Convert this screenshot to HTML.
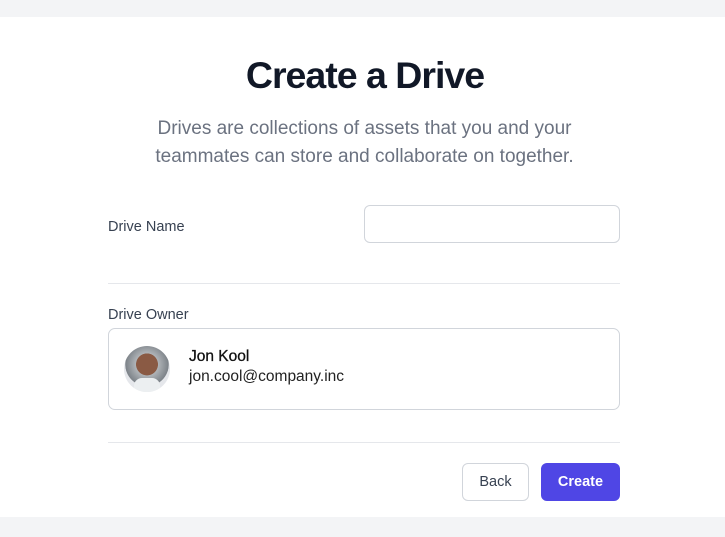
<!DOCTYPE html>
<html><head><meta charset="utf-8"><style>
*{margin:0;padding:0;box-sizing:border-box}
body{width:725px;height:537px;background:#f3f4f6;font-family:"Liberation Sans",sans-serif;position:relative;overflow:hidden}
.card{position:absolute;left:0;top:17px;width:725px;height:500px;background:#fff}
.abs{position:absolute}
h1{position:absolute;left:0;width:730px;top:37px;text-align:center;font-size:37.5px;font-weight:bold;color:#111827;letter-spacing:-1px}
.sub{position:absolute;left:0;width:729px;top:98px;text-align:center;font-size:19px;line-height:28px;color:#6b7280}
.lbl{font-size:14.5px;color:#374151}
.hr{position:absolute;left:108px;width:512px;height:1px;background:#e5e7eb}
</style></head><body>
<div class="card">
<h1>Create a Drive</h1>
<div class="sub">Drives are collections of assets that you and your<br>teammates can store and collaborate on together.</div>
<div class="abs lbl" style="left:108px;top:202px">Drive Name</div>
<div class="abs" style="left:364px;top:188px;width:256px;height:38px;border:1px solid #d1d5db;border-radius:6px"></div>
<div class="hr" style="top:266px"></div>
<div class="abs lbl" style="left:108px;top:290px">Drive Owner</div>
<div class="abs" style="left:108px;top:311px;width:512px;height:82px;border:1px solid #d1d5db;border-radius:7px"></div>
<div class="abs" style="left:124px;top:329px;width:46px;height:46px;border-radius:50%;background:radial-gradient(circle at 50% 40%,#8a5a44 0 30%,#b0b4b8 31%,#7c8288 60%,#e5e7eb 61%);overflow:hidden"><div style="position:absolute;left:10px;top:32px;width:26px;height:16px;background:#eceff1;border-radius:8px 8px 0 0"></div></div>
<div class="abs" style="left:189px;top:331px;font-size:15.5px;color:#111;font-weight:500;-webkit-text-stroke:0.3px #111">Jon Kool</div>
<div class="abs" style="left:189px;top:351px;font-size:15.5px;color:#222">jon.cool@company.inc</div>
<div class="hr" style="top:425px"></div>
<div class="abs" style="left:462px;top:446px;width:67px;height:38px;border:1px solid #d1d5db;border-radius:6px;text-align:center;line-height:37px;font-size:14.5px;color:#374151">Back</div>
<div class="abs" style="left:541px;top:446px;width:79px;height:38px;background:#4f46e5;border-radius:6px;text-align:center;line-height:39px;font-size:14.5px;font-weight:bold;color:#fff">Create</div>
</div>
</body></html>
